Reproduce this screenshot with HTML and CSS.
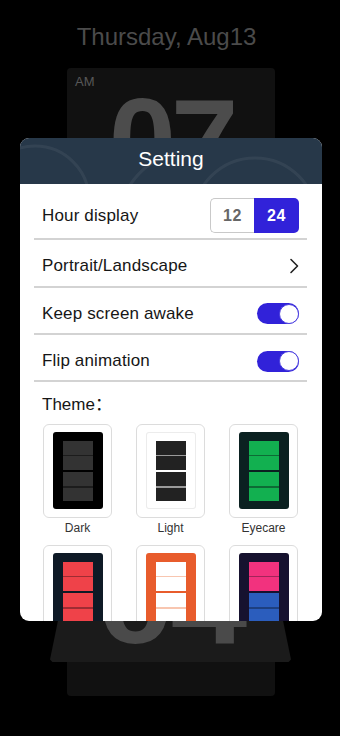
FILE: index.html
```html
<!DOCTYPE html>
<html lang="en">
<head>
<meta charset="utf-8">
<title>Flip Clock Settings</title>
<link rel="stylesheet" href="styles.css">
</head>
<body>
  <div class="clock-screen">
    <div class="date">Thursday, Aug13</div>
    <div class="flip-card">
      <span class="ampm">AM</span>
      <div class="digits">07</div>
      <div class="leaf"><span class="leaf-digits">04</span></div>
    </div>
  </div>

  <div class="modal">
    <div class="modal-header">
      <svg class="header-arcs" viewBox="0 0 302 46" width="302" height="46" aria-hidden="true">
        <circle cx="15" cy="62" r="54" />
        <path d="M 110 47 A 80 80 0 0 1 150 16" />
        <circle cx="235" cy="82" r="62" />
      </svg>
      <div class="modal-title">Setting</div>
    </div>
    <div class="modal-body">
      <div class="row">
        <span class="row-label">Hour display</span>
        <div class="segmented">
          <span class="seg seg-off">12</span>
          <span class="seg seg-on">24</span>
        </div>
      </div>
      <div class="row">
        <span class="row-label">Portrait/Landscape</span>
        <svg class="chevron" viewBox="0 0 10 16" width="10" height="16" aria-hidden="true">
          <polyline points="2,1.5 8.5,8 2,14.5" />
        </svg>
      </div>
      <div class="row">
        <span class="row-label">Keep screen awake</span>
        <span class="switch"><span class="knob"></span></span>
      </div>
      <div class="row">
        <span class="row-label">Flip animation</span>
        <span class="switch"><span class="knob"></span></span>
      </div>

      <div class="theme-section">
        <div class="theme-heading">Theme：</div>
        <div class="theme-grid">
          <div class="theme">
            <div class="theme-card">
              <div class="preview p-dark">
                <div class="group"><i></i><i></i></div>
                <div class="group"><i></i><i></i></div>
              </div>
            </div>
            <div class="theme-name">Dark</div>
          </div>
          <div class="theme">
            <div class="theme-card">
              <div class="preview p-light">
                <div class="group"><i></i><i></i></div>
                <div class="group"><i></i><i></i></div>
              </div>
            </div>
            <div class="theme-name">Light</div>
          </div>
          <div class="theme">
            <div class="theme-card">
              <div class="preview p-eye">
                <div class="group"><i></i><i></i></div>
                <div class="group"><i></i><i></i></div>
              </div>
            </div>
            <div class="theme-name">Eyecare</div>
          </div>
          <div class="theme">
            <div class="theme-card">
              <div class="preview p-red">
                <div class="group"><i></i><i></i></div>
                <div class="group"><i></i><i></i></div>
              </div>
            </div>
          </div>
          <div class="theme">
            <div class="theme-card">
              <div class="preview p-orange">
                <div class="group"><i></i><i></i></div>
                <div class="group"><i></i><i></i></div>
              </div>
            </div>
          </div>
          <div class="theme">
            <div class="theme-card">
              <div class="preview p-mix">
                <div class="group g-pink"><i></i><i></i></div>
                <div class="group g-blue"><i></i><i></i></div>
              </div>
            </div>
          </div>
        </div>
      </div>
    </div>
  </div>
</body>
</html>
```
FILE: styles.css
```css
* {
  box-sizing: border-box;
  margin: 0;
  padding: 0;
}

html,
body {
  background: #000;
}

body {
  width: 340px;
  height: 736px;
  overflow: hidden;
  position: relative;
  font-family: "Liberation Sans", Arial, "Noto Sans CJK SC", sans-serif;
}

/* ---------- clock behind the dialog ---------- */
.clock-screen {
  display: flex;
  flex-direction: column;
  align-items: center;
  padding-top: 22.7px;
}

.date {
  font-size: 24px;
  line-height: 28px;
  color: #4b4b4b;
  margin-right: 7px;
}

.flip-card {
  position: relative;
  margin-top: 17.3px;
  margin-left: 2px;
  width: 208px;
  height: 628px;
  background: #111;
  border-radius: 4px;
}

.ampm {
  position: absolute;
  top: 6px;
  left: 8px;
  font-size: 13px;
  line-height: 15px;
  color: #585858;
}

.digits {
  padding-top: 13px;
  font-size: 121px;
  line-height: 121px;
  font-weight: 700;
  letter-spacing: -5px;
  color: #4c4c4c;
  text-align: center;
}

.leaf {
  position: absolute;
  left: -17px;
  right: -16px;
  top: 472px;
  height: 122px;
  background: #1b1b1b;
  clip-path: polygon(10.2% 0, 89.8% 0, 100% 98%, 99% 100%, 1% 100%, 0 98%);
  text-align: center;
  overflow: hidden;
}

.leaf-digits {
  display: block;
  padding-top: 4px;
  font-size: 117px;
  line-height: 117px;
  font-weight: 700;
  letter-spacing: -3px;
  color: #4a4a4a;
  transform: scaleX(1.18);
}

/* ---------- dialog ---------- */
.modal {
  position: absolute;
  left: 20px;
  top: 138px;
  width: 302px;
  height: 483px;
  background: #fff;
  border-radius: 9px;
  overflow: hidden;
}

.modal-header {
  position: relative;
  height: 45.5px;
  background: #273849;
  display: flex;
  align-items: center;
  justify-content: center;
  overflow: hidden;
}

.header-arcs {
  position: absolute;
  left: 0;
  top: 0;
}

.header-arcs circle,
.header-arcs path {
  fill: none;
  stroke: rgba(255, 255, 255, 0.06);
  stroke-width: 3;
}

.modal-title {
  position: relative;
  margin-top: -3px;
  color: #fff;
  font-size: 21px;
  line-height: 24px;
}

.modal-body {
  padding: 9.4px 15px 0 14px;
}

.row {
  display: flex;
  align-items: center;
  justify-content: space-between;
  height: 47.4px;
  padding: 6.8px 8px 0 8px;
  border-bottom: 2px solid #d3d3d3;
  font-size: 17px;
  letter-spacing: 0.15px;
  color: #161616;
}

.row:first-child {
  padding-top: 0;
}

.segmented {
  display: flex;
  height: 35px;
  font-size: 16px;
  font-weight: 700;
  letter-spacing: 0.5px;
}

.seg {
  display: flex;
  align-items: center;
  justify-content: center;
  width: 44px;
}

.seg-off {
  border: 1px solid #c9c9c9;
  border-right: none;
  border-radius: 5px 0 0 5px;
  color: #666;
}

.seg-on {
  width: 45px;
  background: #3122d9;
  color: #fff;
  border-radius: 0 5px 5px 0;
}

.chevron polyline {
  fill: none;
  stroke: #222;
  stroke-width: 1.6;
  stroke-linecap: round;
  stroke-linejoin: round;
}

.switch {
  display: flex;
  justify-content: flex-end;
  align-items: center;
  width: 42px;
  height: 21px;
  border-radius: 11px;
  background: #3122d9;
}

.knob {
  width: 20px;
  height: 20px;
  border-radius: 50%;
  background: #fff;
  border: 1.5px solid #4b3fe0;
}

/* ---------- themes ---------- */
.theme-section {
  padding: 13px 0 0 8px;
}

.theme-heading {
  font-size: 17px;
  line-height: 20px;
  color: #161616;
}

.theme-grid {
  display: grid;
  grid-template-columns: repeat(3, 69px);
  column-gap: 24px;
  row-gap: 27px;
  margin-top: 8.5px;
  padding-left: 1px;
}

.theme-card {
  height: 94px;
  border: 1px solid #dcdcdc;
  border-radius: 6px;
  display: flex;
  justify-content: center;
  padding-top: 7px;
}

.theme-name {
  margin-top: 3px;
  margin-bottom: -17px;
  font-size: 12px;
  line-height: 14px;
  text-align: center;
  color: #333;
}

.preview {
  width: 50px;
  height: 77px;
  border-radius: 3px;
  display: flex;
  flex-direction: column;
  align-items: center;
  gap: 2.5px;
  padding-top: 9px;
}

.group {
  width: 30px;
  height: 29px;
  display: flex;
  flex-direction: column;
  gap: 1.5px;
}

.group i {
  flex: 1;
  display: block;
}

.p-dark { background: #000; }
.p-dark .group { background: #1c1c1c; }
.p-dark .group i { background: #333; }

.p-light {
  background: #fff;
  box-shadow: inset 0 0 0 1px #ececec;
}
.p-light .group { background: #9a9a9a; }
.p-light .group i { background: #222; }

.p-eye { background: #0b2121; }
.p-eye .group { background: #0d6b35; }
.p-eye .group i { background: #12b050; }

.p-red { background: #0e1a26; }
.p-red .group { background: #9e2c33; }
.p-red .group i { background: #ef4249; }

.p-orange { background: #e85c2c; }
.p-orange .group { background: #f8c6b0; }
.p-orange .group i { background: #fff; }

.p-mix { background: #16122f; }
.p-mix .g-pink { background: #a3245a; }
.p-mix .g-pink i { background: #f2327e; }
.p-mix .g-blue { background: #1d3f80; }
.p-mix .g-blue i { background: #2b5dbd; }
```
